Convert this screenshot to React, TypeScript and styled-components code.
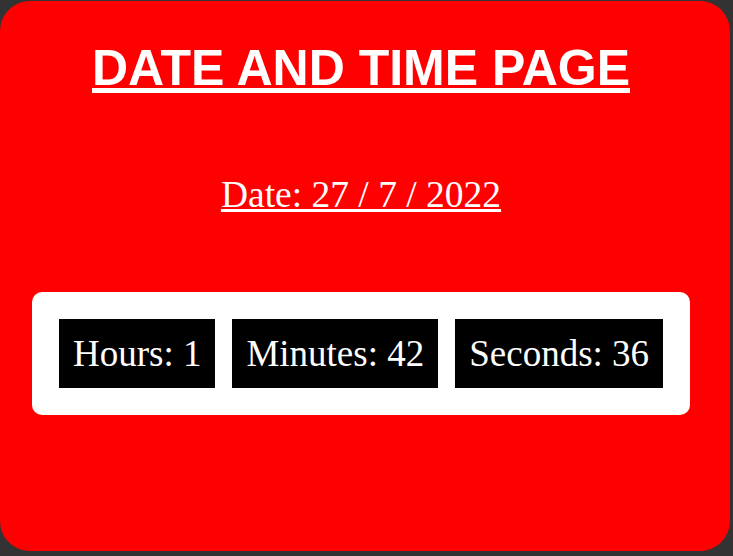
import { createGlobalStyle, styled } from 'styled-components'

const GlobalStyle = createGlobalStyle`
  html, body {
    margin: 0;
    padding: 0;
    background: #333333;
  }
`

const Page = styled.div`
  width: 733px;
  height: 556px;
  box-sizing: border-box;
  padding: 1px 3px 5px 0;
`

const Card = styled.main`
  box-sizing: border-box;
  width: 730px;
  height: 550px;
  padding: 39px 40px 0 32px;
  background: #ff0000;
  border-radius: 30px;
  color: #ffffff;
  text-align: center;
`

const Title = styled.h1`
  margin: 0;
  font-family: 'Liberation Sans', Arial, sans-serif;
  font-size: 50px;
  font-weight: 700;
  line-height: 57px;
  text-decoration: underline;
`

const DateLine = styled.p`
  margin: 77px 0 0;
  font-family: 'Liberation Serif', 'Times New Roman', serif;
  font-size: 37.5px;
  line-height: 42px;
  text-decoration: underline;
`

const Clock = styled.section`
  display: flex;
  justify-content: center;
  gap: 17px;
  margin-top: 76px;
  padding: 27px;
  background: #ffffff;
  border-radius: 10px;
`

const Unit = styled.div`
  padding: 14px;
  background: #000000;
  color: #ffffff;
  font-family: 'Liberation Serif', 'Times New Roman', serif;
  font-size: 37px;
  line-height: 41px;
  white-space: nowrap;
`

export default function App() {
  const units = [
    { label: 'Hours', value: 1 },
    { label: 'Minutes', value: 42 },
    { label: 'Seconds', value: 36 },
  ]

  return (
    <>
      <GlobalStyle />
      <Page>
        <Card>
          <Title>DATE AND TIME PAGE</Title>
          <DateLine>Date: 27 / 7 / 2022</DateLine>
          <Clock>
            {units.map((u) => (
              <Unit key={u.label}>
                {u.label}: {u.value}
              </Unit>
            ))}
          </Clock>
        </Card>
      </Page>
    </>
  )
}
